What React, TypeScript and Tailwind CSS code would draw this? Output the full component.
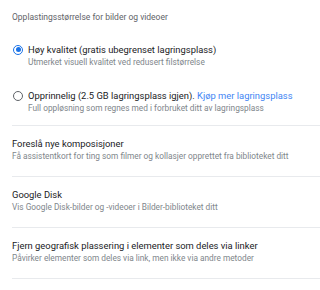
import React from 'react';

type Row = { title: string; sub: string };

const rows: Row[] = [
    { title: 'Foreslå nye komposisjoner', sub: 'Få assistentkort for ting som filmer og kollasjer opprettet fra biblioteket ditt' },
    { title: 'Google Disk', sub: 'Vis Google Disk-bilder og -videoer i Bilder-biblioteket ditt' },
    { title: 'Fjern geografisk plassering i elementer som deles via linker', sub: 'Påvirker elementer som deles via link, men ikke via andre metoder' },
];

function Radio({ checked }: { checked: boolean }) {
    return (
        <span
            className={
                checked
                    ? 'flex h-[10px] w-[10px] shrink-0 items-center justify-center rounded-full border-[1.5px] border-[#1a73e8]'
                    : 'flex h-[10px] w-[10px] shrink-0 items-center justify-center rounded-full border-[1.5px] border-[#5f6368]'
            }
        >
            {checked && <span className="h-[5px] w-[5px] rounded-full bg-[#1a73e8]" />}
        </span>
    );
}

export default function App() {
    return (
        <main className="h-[290px] w-[320px] overflow-hidden bg-white pl-3 font-['Roboto',sans-serif]">
            <div className="pt-[11px] text-[8.5px] leading-[12px] text-[#5f6368]">
                Opplastingsstørrelse for bilder og videoer
            </div>
            <div className="mt-[20px] flex flex-col gap-[21px] border-b border-[#e8eaed] pb-[11px]">
                <div className="flex">
                    <div className="flex h-[13px] w-[16px] items-center pl-[1px]">
                        <Radio checked />
                    </div>
                    <div>
                        <div className="text-[9.4px] leading-[13px] text-[#202124]">
                            Høy kvalitet (gratis ubegrenset lagringsplass)
                        </div>
                        <div className="text-[8.3px] leading-[12px] text-[#80868b]">
                            Utmerket visuell kvalitet ved redusert filstørrelse
                        </div>
                    </div>
                </div>
                <div className="flex">
                    <div className="flex h-[13px] w-[16px] items-center pl-[1px]">
                        <Radio checked={false} />
                    </div>
                    <div>
                        <div className="text-[9.4px] leading-[13px] text-[#202124]">
                            Opprinnelig (2.5 GB lagringsplass igjen).{' '}
                            <span className="text-[#4285f4]">Kjøp mer lagringsplass</span>
                        </div>
                        <div className="text-[8.3px] leading-[12px] text-[#80868b]">
                            Full oppløsning som regnes med i forbruket ditt av lagringsplass
                        </div>
                    </div>
                </div>
            </div>
            {rows.map((r) => (
                <div key={r.title} className="border-b border-[#e8eaed] pt-[11px] pb-[14px]">
                    <div className="text-[9.4px] leading-[13px] text-[#202124]">{r.title}</div>
                    <div className="text-[8.3px] leading-[12px] text-[#80868b]">{r.sub}</div>
                </div>
            ))}
        </main>
    );
}
